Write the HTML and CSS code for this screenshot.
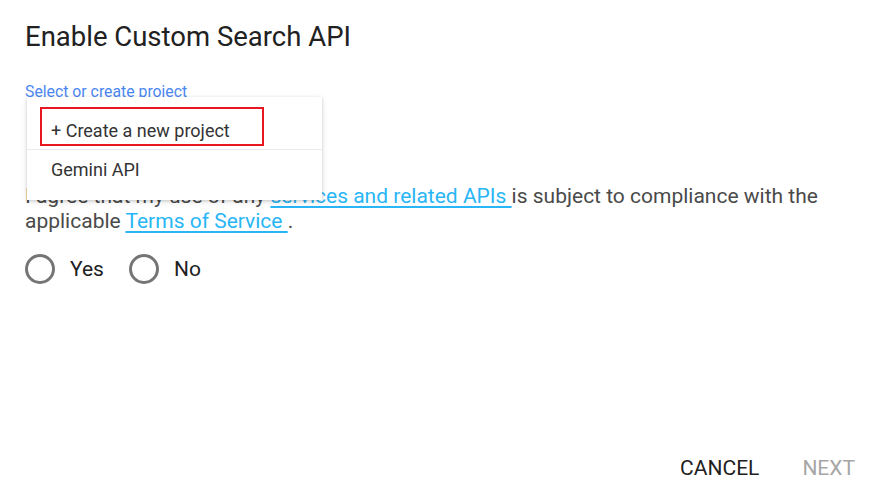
FILE: index.html
```html
<!DOCTYPE html>
<html>
<head>
<meta charset="utf-8">
<link rel="stylesheet" href="styles.css">
</head>
<body>
<div class="dialog">
  <h1 class="title">Enable Custom Search API</h1>
  <div class="field">
    <div class="label">Select or create project</div>
    <div class="select-space"></div>
    <div class="menu">
      <div class="menu-item create"><span class="highlight">+ Create a new project</span></div>
      <div class="menu-item">Gemini API</div>
    </div>
  </div>
  <p class="terms">I agree that my use of any <a href="#">services and related APIs </a> is subject to compliance with the applicable <a href="#">Terms of Service </a>.</p>
  <div class="radios">
    <label class="radio"><span class="circle"></span><span>Yes</span></label>
    <label class="radio"><span class="circle"></span><span>No</span></label>
  </div>
  <div class="spacer"></div>
  <div class="actions">
    <button class="btn">CANCEL</button>
    <button class="btn disabled">NEXT</button>
  </div>
</div>
</body>
</html>
```
FILE: styles.css
```css
html, body {
  margin: 0;
  padding: 0;
  background: #fff;
}
body {
  font-family: Roboto, "Liberation Sans", sans-serif;
  width: 880px;
  height: 493px;
  overflow: hidden;
}
.dialog {
  box-sizing: border-box;
  height: 493px;
  padding: 20px 25px 0 25px;
  display: flex;
  flex-direction: column;
}
.title {
  margin: 0;
  font-size: 27.5px;
  font-weight: 400;
  line-height: 34px;
  color: #212121;
}
.field {
  position: relative;
  margin-top: 29px;
}
.label {
  font-size: 15.8px;
  line-height: 18px;
  color: #4c87f0;
  white-space: nowrap;
}
.select-space {
  height: 83px;
}
.menu {
  position: absolute;
  left: 2px;
  top: 14px;
  width: 295px;
  background: #fff;
  box-shadow: 0 1px 3px rgba(0,0,0,0.18), 0 2px 8px rgba(0,0,0,0.08);
  padding: 10px 0 10px;
  z-index: 2;
}
.menu-item {
  font-size: 18px;
  color: #333;
  padding: 0 0 0 24px;
  height: 40px;
  line-height: 40px;
  white-space: nowrap;
}
.menu-item.create {
  padding-left: 13px;
  height: 42px;
  line-height: 39px;
  border-bottom: 1px solid #ebebeb;
}
.highlight {
  display: inline-block;
  vertical-align: top;
  box-sizing: border-box;
  width: 224px;
  height: 39px;
  line-height: 31px;
  border: 2px solid #e8171f;
  padding: 6px 0 0 9px;
}
.terms {
  margin: 0;
  font-size: 21px;
  line-height: 25px;
  color: #4a4a4a;
}
.terms a {
  color: #29b6f6;
  text-decoration: underline;
  text-underline-offset: 3px;
}
.radios {
  display: flex;
  gap: 25px;
  margin-top: 20px;
}
.radio {
  display: flex;
  align-items: center;
  gap: 15px;
  font-size: 21px;
  color: #212121;
}
.circle {
  box-sizing: border-box;
  width: 30px;
  height: 30px;
  border: 3px solid #757575;
  border-radius: 50%;
}
.spacer {
  flex: 1;
}
.actions {
  display: flex;
  justify-content: flex-end;
  gap: 43px;
  padding-bottom: 12px;
}
.btn {
  background: none;
  border: 0;
  font-family: Roboto, "Liberation Sans", sans-serif;
  font-size: 21px;
  color: #212121;
  padding: 0;
  line-height: 26px;
}
.btn.disabled {
  color: #a6a6a6;
}
```
